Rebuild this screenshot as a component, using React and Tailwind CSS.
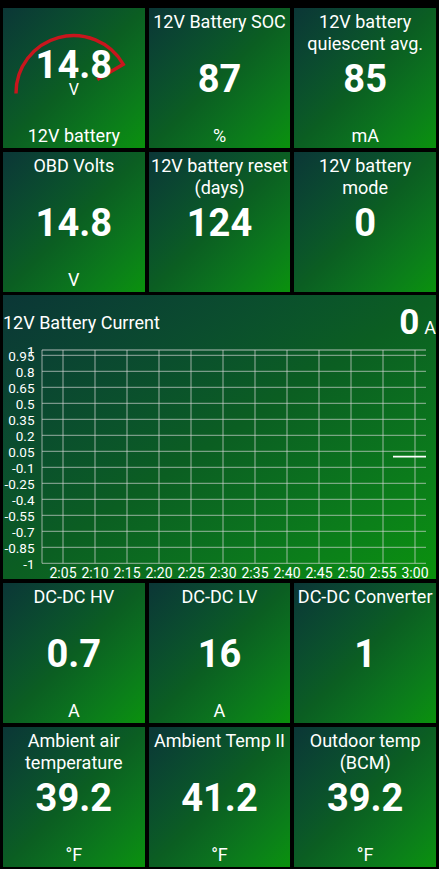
import React from "react";

const GRAD = "bg-linear-to-br from-[#0b3636] via-[#0b5e22] to-[#0a920b]";

function Tile({ title, value, unit }) {
  return (
    <div className={`grid h-[140px] overflow-hidden text-white ${GRAD}`}>
      <div className="col-start-1 row-start-1 self-start pt-[3px] text-center text-[18px] leading-[21.6px]">
        {title}
      </div>
      <div className="col-start-1 row-start-1 self-center justify-self-center pt-[2px] text-[38px] font-bold leading-none">
        {value}
      </div>
      <div className="col-start-1 row-start-1 self-end pb-[1px] text-center text-[18px] leading-[21.6px]">
        {unit}
      </div>
    </div>
  );
}

function GaugeTile() {
  return (
    <div className={`grid h-[140px] overflow-hidden text-white ${GRAD}`}>
      <svg className="col-start-1 row-start-1" width="100%" height="140">
        <path
          d="M 13 85.4 A 57.5 57.5 0 0 1 120.3 56.3 L 94.3 71.5"
          fill="none"
          stroke="#c8161d"
          strokeWidth="3.4"
          strokeLinejoin="miter"
        />
      </svg>
      <div className="col-start-1 row-start-1 flex flex-col items-center self-start justify-self-center pt-[38px]">
        <span className="text-[38px] font-bold leading-none">14.8</span>
        <span className="-mt-[2px] text-[16px] leading-none">V</span>
      </div>
      <div className="col-start-1 row-start-1 self-end pb-[1px] text-center text-[18px] leading-[21.6px]">
        12V battery
      </div>
    </div>
  );
}

const yVals = [1];
for (let k = 0; k <= 13; k++) yVals.push(+(0.95 - 0.15 * k).toFixed(2));
const yPos = (v) => 109.65 - 106.65 * v;
const xLabels = ["2:05", "2:10", "2:15", "2:20", "2:25", "2:30", "2:35", "2:40", "2:45", "2:50", "2:55", "3:00"];

function Chart() {
  const grid = "rgba(215,215,215,0.55)";
  return (
    <div className={`mt-[3px] flex h-[284px] flex-col overflow-hidden text-white ${GRAD}`}>
      <div className="flex h-[52px] items-start justify-between">
        <div className="pt-[17px] text-[18px] leading-[21.6px]">12V Battery Current</div>
        <div className="flex items-start">
          <span className="pt-[10px] text-[35px] font-bold leading-none">0</span>
          <span className="ml-[5px] pt-[22px] text-[18px] leading-[21.6px]">A</span>
        </div>
      </div>
      <svg width="433" height="232" className="block">
        {yVals.map((v) => (
          <line key={"h" + v} x1="39" x2="423" y1={yPos(v)} y2={yPos(v)} stroke={grid} strokeWidth="1.3" />
        ))}
        <line x1="39" x2="39" y1={yPos(1)} y2={yPos(-1)} stroke={grid} strokeWidth="1.3" />
        {xLabels.map((l, i) => (
          <line key={"v" + l} x1={60 + 32 * i} x2={60 + 32 * i} y1={yPos(1)} y2={yPos(-1)} stroke={grid} strokeWidth="1.3" />
        ))}
        {yVals.map((v) => (
          <text key={"t" + v} x="31.5" y={yPos(v) + 5.8} textAnchor="end" fill="#fff" fontSize="13.5">
            {String(v)}
          </text>
        ))}
        {xLabels.map((l, i) => (
          <text key={"x" + l} x={60 + 32 * i} y="230.7" textAnchor="middle" fill="#fff" fontSize="14">
            {l}
          </text>
        ))}
        <line x1="390" x2="423" y1={yPos(0)} y2={yPos(0)} stroke="#fff" strokeWidth="1.6" />
      </svg>
    </div>
  );
}

export default function App() {
  return (
    <div className="min-h-[869px] bg-black px-[3px] pt-[8px] font-['Roboto',sans-serif]">
      <div className="grid grid-cols-3 gap-[4px]">
        <GaugeTile />
        <Tile title="12V Battery SOC" value="87" unit="%" />
        <Tile title="12V battery quiescent avg." value="85" unit="mA" />
      </div>
      <div className="mt-[4px] grid grid-cols-3 gap-[4px]">
        <Tile title="OBD Volts" value="14.8" unit="V" />
        <Tile title="12V battery reset (days)" value="124" unit="" />
        <Tile title="12V battery mode" value="0" unit="" />
      </div>
      <Chart />
      <div className="mt-[4px] grid grid-cols-3 gap-[4px]">
        <Tile title="DC-DC HV" value="0.7" unit="A" />
        <Tile title="DC-DC LV" value="16" unit="A" />
        <Tile title="DC-DC Converter" value="1" unit="" />
      </div>
      <div className="mt-[4px] grid grid-cols-3 gap-[4px]">
        <Tile title="Ambient air temperature" value="39.2" unit="°F" />
        <Tile title="Ambient Temp II" value="41.2" unit="°F" />
        <Tile title="Outdoor temp (BCM)" value="39.2" unit="°F" />
      </div>
    </div>
  );
}
